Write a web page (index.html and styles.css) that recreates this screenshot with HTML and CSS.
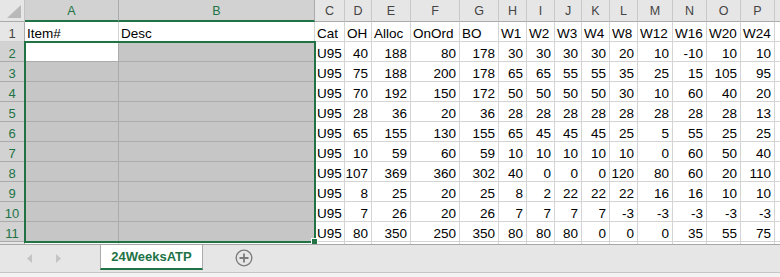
FILE: index.html
```html
<!DOCTYPE html>
<html lang="en">
<head>
    <meta charset="UTF-8">
    <title>24WeeksATP</title>
    <link rel="stylesheet" href="styles.css">
</head>
<body>
    <div class="sheet">
        <div class="grid">
            <div class="corner"><svg width="14" height="13" viewBox="0 0 14 13"><polygon points="14,0 14,13 0,13" fill="#b9b9b9"/></svg></div>
            <div class="ch on">A</div><div class="ch on">B</div><div class="ch">C</div><div class="ch">D</div><div class="ch">E</div><div class="ch">F</div><div class="ch">G</div><div class="ch">H</div><div class="ch">I</div><div class="ch">J</div><div class="ch">K</div><div class="ch">L</div><div class="ch">M</div><div class="ch">N</div><div class="ch">O</div><div class="ch">P</div><div class="ch"></div>

            <div class="rh">1</div><div class="c">Item#</div><div class="c">Desc</div><div class="c">Cat</div><div class="c">OH</div><div class="c">Alloc</div><div class="c">OnOrd</div><div class="c">BO</div><div class="c">W1</div><div class="c">W2</div><div class="c">W3</div><div class="c">W4</div><div class="c">W8</div><div class="c">W12</div><div class="c">W16</div><div class="c">W20</div><div class="c">W24</div><div class="c"></div>

            <div class="rh on">2</div><div class="c act"></div><div class="c sel"></div><div class="c">U95</div><div class="c n">40</div><div class="c n">188</div><div class="c n">80</div><div class="c n">178</div><div class="c n">30</div><div class="c n">30</div><div class="c n">30</div><div class="c n">30</div><div class="c n">20</div><div class="c n">10</div><div class="c n">-10</div><div class="c n">10</div><div class="c n">10</div><div class="c"></div>

            <div class="rh on">3</div><div class="c sel"></div><div class="c sel"></div><div class="c">U95</div><div class="c n">75</div><div class="c n">188</div><div class="c n">200</div><div class="c n">178</div><div class="c n">65</div><div class="c n">65</div><div class="c n">55</div><div class="c n">55</div><div class="c n">35</div><div class="c n">25</div><div class="c n">15</div><div class="c n">105</div><div class="c n">95</div><div class="c"></div>

            <div class="rh on">4</div><div class="c sel"></div><div class="c sel"></div><div class="c">U95</div><div class="c n">70</div><div class="c n">192</div><div class="c n">150</div><div class="c n">172</div><div class="c n">50</div><div class="c n">50</div><div class="c n">50</div><div class="c n">50</div><div class="c n">30</div><div class="c n">10</div><div class="c n">60</div><div class="c n">40</div><div class="c n">20</div><div class="c"></div>

            <div class="rh on">5</div><div class="c sel"></div><div class="c sel"></div><div class="c">U95</div><div class="c n">28</div><div class="c n">36</div><div class="c n">20</div><div class="c n">36</div><div class="c n">28</div><div class="c n">28</div><div class="c n">28</div><div class="c n">28</div><div class="c n">28</div><div class="c n">28</div><div class="c n">28</div><div class="c n">28</div><div class="c n">13</div><div class="c"></div>

            <div class="rh on">6</div><div class="c sel"></div><div class="c sel"></div><div class="c">U95</div><div class="c n">65</div><div class="c n">155</div><div class="c n">130</div><div class="c n">155</div><div class="c n">65</div><div class="c n">45</div><div class="c n">45</div><div class="c n">45</div><div class="c n">25</div><div class="c n">5</div><div class="c n">55</div><div class="c n">25</div><div class="c n">25</div><div class="c"></div>

            <div class="rh on">7</div><div class="c sel"></div><div class="c sel"></div><div class="c">U95</div><div class="c n">10</div><div class="c n">59</div><div class="c n">60</div><div class="c n">59</div><div class="c n">10</div><div class="c n">10</div><div class="c n">10</div><div class="c n">10</div><div class="c n">10</div><div class="c n">0</div><div class="c n">60</div><div class="c n">50</div><div class="c n">40</div><div class="c"></div>

            <div class="rh on">8</div><div class="c sel"></div><div class="c sel"></div><div class="c">U95</div><div class="c n">107</div><div class="c n">369</div><div class="c n">360</div><div class="c n">302</div><div class="c n">40</div><div class="c n">0</div><div class="c n">0</div><div class="c n">0</div><div class="c n">120</div><div class="c n">80</div><div class="c n">60</div><div class="c n">20</div><div class="c n">110</div><div class="c"></div>

            <div class="rh on">9</div><div class="c sel"></div><div class="c sel"></div><div class="c">U95</div><div class="c n">8</div><div class="c n">25</div><div class="c n">20</div><div class="c n">25</div><div class="c n">8</div><div class="c n">2</div><div class="c n">22</div><div class="c n">22</div><div class="c n">22</div><div class="c n">16</div><div class="c n">16</div><div class="c n">10</div><div class="c n">10</div><div class="c"></div>

            <div class="rh on">10</div><div class="c sel"></div><div class="c sel"></div><div class="c">U95</div><div class="c n">7</div><div class="c n">26</div><div class="c n">20</div><div class="c n">26</div><div class="c n">7</div><div class="c n">7</div><div class="c n">7</div><div class="c n">7</div><div class="c n">-3</div><div class="c n">-3</div><div class="c n">-3</div><div class="c n">-3</div><div class="c n">-3</div><div class="c"></div>

            <div class="rh on">11</div><div class="c sel"></div><div class="c sel"></div><div class="c">U95</div><div class="c n">80</div><div class="c n">350</div><div class="c n">250</div><div class="c n">350</div><div class="c n">80</div><div class="c n">80</div><div class="c n">80</div><div class="c n">0</div><div class="c n">0</div><div class="c n">0</div><div class="c n">35</div><div class="c n">55</div><div class="c n">75</div><div class="c"></div>

            <!-- row 12 only peeks out under the tab bar -->
            <div class="rh"></div><div class="c"></div><div class="c"></div><div class="c"></div><div class="c"></div><div class="c"></div><div class="c"></div><div class="c"></div><div class="c"></div><div class="c"></div><div class="c"></div><div class="c"></div><div class="c"></div><div class="c"></div><div class="c"></div><div class="c"></div><div class="c"></div><div class="c"></div>
        </div>
        <!-- selected range A2:B11 -->
        <div class="selection"></div>
        <div class="fill-handle"></div>
    </div>

    <div class="tabbar">
        <div class="nav">
            <svg width="5" height="9" viewBox="0 0 5 9"><polygon points="5,0 5,9 0,4.5" fill="#c4c4c4"/></svg>
            <svg width="5" height="9" viewBox="0 0 5 9"><polygon points="0,0 0,9 5,4.5" fill="#c4c4c4"/></svg>
        </div>
        <div class="tab">24WeeksATP</div>
        <div class="add">
            <svg width="18" height="18" viewBox="0 0 18 18">
                <circle cx="9" cy="9" r="7.8" fill="none" stroke="#7a7a7a" stroke-width="1.3"/>
                <path d="M9 4.5v9M4.5 9h9" stroke="#7a7a7a" stroke-width="1.8"/>
            </svg>
        </div>
    </div>
    <div class="status"></div>
</body>
</html>
```

FILE: styles.css
```css
body {
    margin: 0;
    font-family: "Liberation Sans", Arial, sans-serif;
    background: #fff;
    width: 780px;
    overflow: hidden;
}

.sheet {
    position: relative;
    height: 244px;
    overflow: hidden;
}

.grid {
    display: grid;
    grid-template-columns: 25px 94px 196px 30px 27px 39px 49px 39px 28px 28px 27px 28px 28px 35px 34px 34px 34px 40px;
    grid-template-rows: 22px repeat(11, 20px) 20px;
    width: 815px;
}

.grid > div {
    box-sizing: border-box;
    overflow: hidden;
    white-space: nowrap;
}

.corner {
    background: #e6e6e6;
    border-right: 1px solid #c4c4c4;
    border-bottom: 1px solid #ababab;
    display: flex;
    align-items: flex-end;
    justify-content: flex-end;
    padding: 0 3px 3px 0;
}

.ch {
    background: #e6e6e6;
    border-right: 1px solid #c8c8c8;
    border-bottom: 1px solid #ababab;
    color: #444;
    font-size: 12.5px;
    text-align: center;
    line-height: 14px;
    padding-top: 4px;
}

.ch.on {
    background: #d2d2d2;
    color: #217346;
    border-right-color: #ababab;
    border-bottom: 2px solid #217346;
}

.rh {
    background: #e6e6e6;
    border-right: 1px solid #ababab;
    border-bottom: 1px solid #d0d0d0;
    color: #444;
    font-size: 13px;
    text-align: center;
    line-height: 15px;
    padding-top: 4px;
}

.rh.on {
    background: #d2d2d2;
    color: #217346;
    border-bottom-color: #ababab;
}

.c {
    border-right: 1px solid #d4d4d4;
    border-bottom: 1px solid #d4d4d4;
    color: #000;
    font-size: 13.5px;
    line-height: 15px;
    padding: 4px 0 0 2px;
}

.c.n {
    text-align: right;
    padding: 4px 3px 0 0;
}

.c.sel {
    background: #c6c6c6;
    border-color: #ababab;
}

.c.act {
    background: #fff;
    border-right-color: #ababab;
    border-bottom-color: #ababab;
}

.selection {
    position: absolute;
    left: 24px;
    top: 41px;
    width: 292px;
    height: 202px;
    border: 2px solid #217346;
    box-sizing: border-box;
}

.fill-handle {
    position: absolute;
    left: 311px;
    top: 238px;
    width: 5px;
    height: 5px;
    background: #217346;
    border: 1px solid #fff;
}

.tabbar {
    display: flex;
    align-items: stretch;
    height: 27px;
    background: #e6e6e6;
    border-top: 1px solid #a6a6a6;
    border-bottom: 1px solid #c6c6c6;
}

.nav {
    width: 100px;
    display: flex;
    align-items: center;
    gap: 24px;
    padding-left: 27px;
    box-sizing: border-box;
}

.tab {
    width: 103px;
    height: 25px;
    box-sizing: border-box;
    background: #fff;
    border-left: 1px solid #ababab;
    border-right: 1px solid #ababab;
    border-bottom: 2px solid #217346;
    color: #217346;
    font-weight: bold;
    font-size: 13px;
    text-align: center;
    line-height: 23px;
}

.add {
    display: flex;
    align-items: center;
    margin-left: 32px;
    padding-bottom: 2px;
}

.status {
    height: 4px;
    background: #f3f3f3;
}
```
